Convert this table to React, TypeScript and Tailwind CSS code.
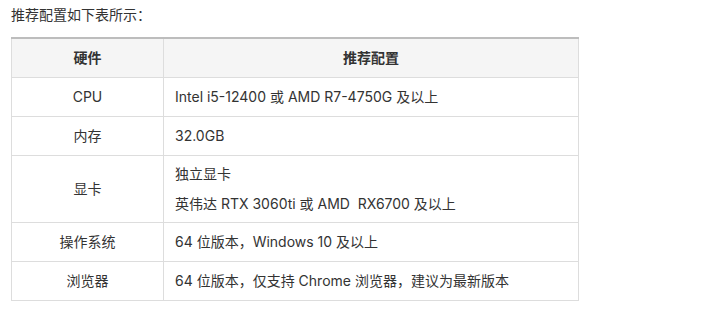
const rows: { name: string; lines: string[] }[] = [
  { name: "CPU", lines: ["Intel i5-12400 或 AMD R7-4750G 及以上"] },
  { name: "内存", lines: ["32.0GB"] },
  { name: "显卡", lines: ["独立显卡", "英伟达 RTX 3060ti 或 AMD  RX6700 及以上"] },
  { name: "操作系统", lines: ["64 位版本，Windows 10 及以上"] },
  { name: "浏览器", lines: ["64 位版本，仅支持 Chrome 浏览器，建议为最新版本"] },
];

export default function App() {
  return (
    <div
      className="w-[715px] h-[321px] bg-white px-[11px] pt-[5px] text-[14px] text-[#333]"
      style={{ fontFamily: 'Inter, "Noto Sans CJK SC", sans-serif' }}
    >
      <p className="leading-[20px]">推荐配置如下表所示：</p>
      <table className="mt-[12px] w-[568px] border-collapse border-t-2 border-t-[#bdbdbd]">
        <thead>
          <tr className="h-[39px] bg-[#f5f5f5]">
            <th className="w-[152px] border border-[#dddddd] border-t-0 font-bold">硬件</th>
            <th className="border border-[#dddddd] border-t-0 font-bold">推荐配置</th>
          </tr>
        </thead>
        <tbody>
          {rows.map((r) => (
            <tr key={r.name} className={r.lines.length > 1 ? "h-[67px]" : "h-[39px]"}>
              <td className="border border-[#dddddd] text-center">{r.name}</td>
              <td className="border border-[#dddddd] px-[11px]">
                {r.lines.map((l) => (
                  <div key={l} className="leading-[30px] whitespace-pre">
                    {l}
                  </div>
                ))}
              </td>
            </tr>
          ))}
        </tbody>
      </table>
    </div>
  );
}
